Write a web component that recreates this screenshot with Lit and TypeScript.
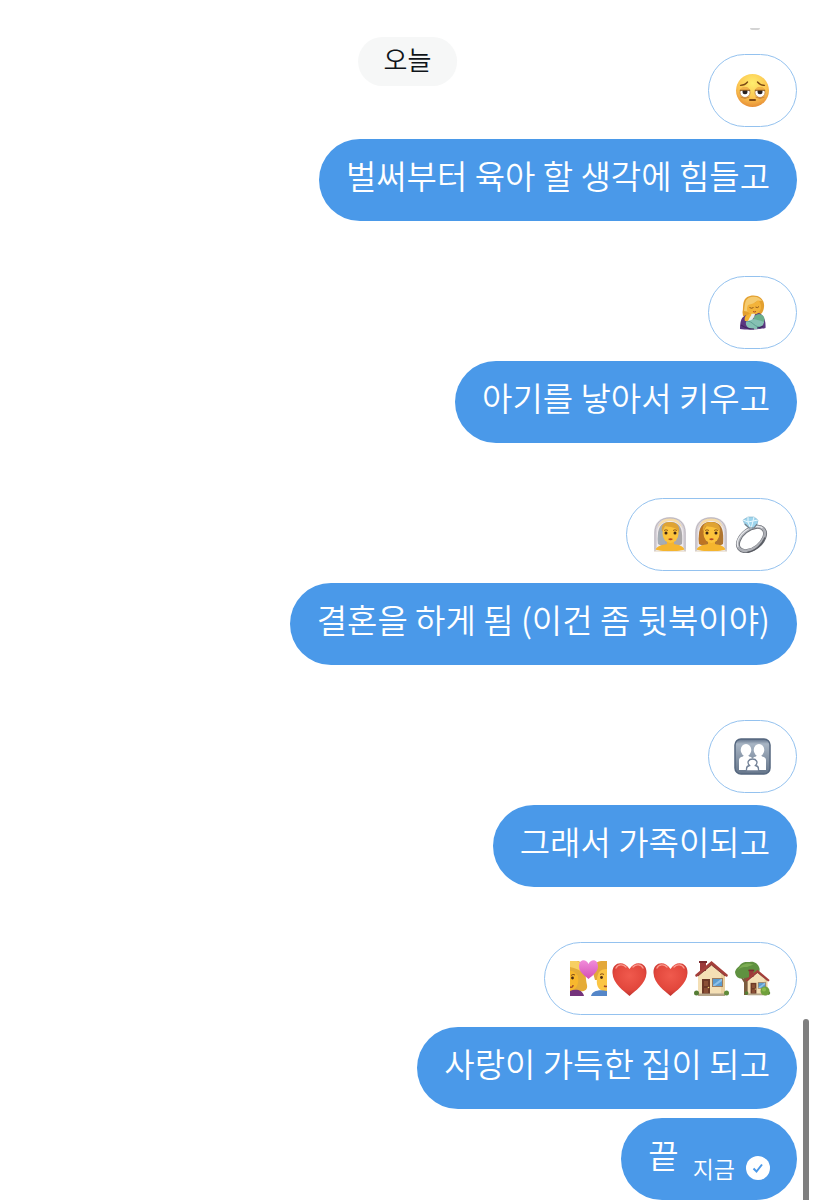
import { LitElement, html, css, svg, nothing, SVGTemplateResult } from 'lit';
import { customElement, property } from 'lit/decorators.js';

interface Message {
  text: string;
  reactions: string[];
  time?: string;
}

const MESSAGES: Message[] = [
  { text: '벌써부터 육아 할 생각에 힘들고', reactions: ['tired'] },
  { text: '아기를 낳아서 키우고', reactions: ['nursing'] },
  { text: '결혼을 하게 됨 (이건 좀 뒷북이야)', reactions: ['bride-grey', 'bride', 'ring'] },
  { text: '그래서 가족이되고', reactions: ['family'] },
  { text: '사랑이 가득한 집이 되고', reactions: ['couple', 'heart', 'heart', 'house', 'garden'] },
  { text: '끝', reactions: [], time: '지금' },
];

const bride = (left: string, hair: string) => svg`
  <path d="M2 36V17C2 6 9 1 18 1s16 5 16 16v19z" fill="#d9d4da"/>
  <path d="M5 34V17C5 8 11 4 18 4s13 4 13 13v17z" fill="#efebee"/>
  <path d="M6 28C5 14 7 6 18 6s13 8 12 22c-5 4-19 4-24 0z" fill=${hair}/>
  <path d="M6 28C5 15 8 8 16 7l-3 21z" fill=${left}/>
  <path d="M3 35c1-5 7-6 12-7v-4h7v4c5 1 10 2 11 7z" fill="#f5b52e"/>
  <path d="M2 33c7 3 25 3 32 0v3H2z" fill="#eee6dc"/>
  <ellipse cx="18.500" cy="17.500" rx="8" ry="9.500" fill="#fcc33c"/>
  <path d="M10 16C9 9 12 6 18 6c7 0 10 4 9 11-1-3-3-5-8-6-3 0-5-1-6-1-1 2-2 4-3 6z" fill="#dfa332"/>
  <path d="M6 12C8 4 13 2 18 2s10 2 12 10c-4-6-8-7-12-7S9 7 6 12z" fill="#f6dcaa"/>
  <path d="M12 14.500q2-1.500 4 0M21 14.500q2-1.500 4 0" fill="none" stroke="#8a5417" stroke-width=".9"/>
  <circle cx="14" cy="17" r="1.500" fill="#3d2415"/>
  <circle cx="23" cy="17" r="1.500" fill="#3d2415"/>
  <path d="M16 23q2.500-1.500 5 0-2.500 2.500-5 0z" fill="#b54724"/>
  <path d="M3 35V17C3 7 9 2 18 2s15 5 15 15v18" fill="none" stroke="#bdb8c0" stroke-width="1"/>`;

const house = svg`
  <path d="M5 16 18.500 4 32 16v19H5z" fill="#f4dfb5"/>
  <path d="M28 13l4 3v19h-4z" fill="#ead09f"/>
  <path d="M7 1h6v10H7z" fill="#9c3a3a"/>
  <path d="M6 1h8v2H6z" fill="#7b2b2e"/>
  <path d="M2 15 18.500 1 35 15l-1 2-2-1L18.500 5 5 16l-2 1z" fill="#a53f3a"/>
  <path d="M5 16 18.500 5 32 16" fill="none" stroke="#752e2d" stroke-width=".8"/>
  <path d="M9 19h8v16H9z" fill="#6e3a28"/>
  <path d="M11 21h4v5h-4zM11 28h4v5h-4z" fill="#8b5036"/>
  <circle cx="15.500" cy="27.500" r=".8" fill="#f2cf72"/>
  <path d="M19 18h11v9H19z" fill="#9b7b5e"/>
  <path d="M20 19h9v7h-9z" fill="#5b9cd0"/>
  <path d="M20 25l8-6h1v2l-7 5h-2z" fill="#8fc0e6"/>
  <path d="M5 33.500h27V36H5z" fill="#b5a58a"/>
  <circle cx="3.500" cy="33" r="2.500" fill="#557d35"/>
  <circle cx="33.500" cy="33" r="2.500" fill="#5f8b3a"/>`;

const EMOJI: Record<string, { label: string; art: SVGTemplateResult }> = {
  tired: {
    label: '지친 얼굴',
    art: svg`
      <radialGradient id="face" cx=".5" cy=".28" r=".74">
        <stop offset="0" stop-color="#ffee6e"/>
        <stop offset=".6" stop-color="#fcc550"/>
        <stop offset="1" stop-color="#e58a35"/>
      </radialGradient>
      <circle cx="18.500" cy="18.500" r="16.500" fill="url(#face)"/>
      <circle cx="11" cy="20.500" r="5" fill="#fff" stroke="#b87e48" stroke-width=".8"/>
      <circle cx="26" cy="20.500" r="5" fill="#fff" stroke="#b87e48" stroke-width=".8"/>
      <circle cx="11" cy="19.800" r="2.500" fill="#2a2020"/>
      <circle cx="26" cy="19.800" r="2.500" fill="#2a2020"/>
      <path d="M5.800 18.300c1-4.500 9.400-4.500 10.400 0zM20.800 18.300c1-4.500 9.400-4.500 10.400 0z" fill="#f3b348"/>
      <path d="M5.800 18.300h10.400M20.800 18.300h10.400" stroke="#80501e" stroke-width="1"/>
      <path d="M6.500 13.300c3.500 0 5.500-1.300 7-3.300M30.500 13.300c-3.500 0-5.500-1.300-7-3.300" fill="none" stroke="#7b4a15" stroke-width="1.300" stroke-linecap="round"/>
      <path d="M6.500 25q4.500 3 9 0M30.500 25q-4.500 3-9 0" fill="none" stroke="#c98032" stroke-width=".9"/>
      <path d="M16 28h5" stroke="#7d4714" stroke-width="2" stroke-linecap="round"/>`,
  },
  nursing: {
    label: '수유',
    art: svg`
      <path d="M8.500 18C10 14 7 4 16 2c8-2 15 3 14 11-.4 4-2 7-5 8l-8 2-8-1z" fill="#e3a030"/>
      <path d="M10 17c1-5 0-13 7-14 6-1 9 1 11 4-7-1-10 3-12 11z" fill="#f5cb70"/>
      <path d="M6 35c0-7 1-13 7-14l12-2c5 2 7 8 6.500 15-8 2-19 2-25.500 1z" fill="#5b3680"/>
      <path d="M14 11c5-1 9-3 10-5 4 4 4 9 1 12s-7 4-10 1-2-5-1-8z" fill="#f3b33a"/>
      <path d="M15.500 13.500q2 1.500 4 0M21.500 13q2 1.500 3.500-.5" fill="none" stroke="#875018" stroke-width=".9"/>
      <path d="M19 17.500q1.500 1 3 0" fill="none" stroke="#ac4b20" stroke-width="1"/>
      <circle cx="25" cy="25.500" r="5.500" fill="#6aae8c"/>
      <path d="M12 28c3-5 10-3 18 0-1 5-4 7-9 7-6 1-10-3-9-7z" fill="#86c0b3"/>
      <path d="M13 27c6 0 7 7 15 6" fill="none" stroke="#5c9e92" stroke-width="1"/>
      <path d="M12 25c2-4 5-6 9-5-1 5-3 6-7 7z" fill="#e9edeb"/>
      <path d="M11 27c-1-3 0-6 4-7 3-1 3 1 1 3l-2 4z" fill="#f4b331"/>
      <path d="M7 31c4 3 8 4 13 4M29 32c-2 2-4 2-6 2" fill="none" stroke="#402660" stroke-width="1.200"/>`,
  },
  'bride-grey': { label: '신부', art: bride('#a5adb4', '#aaa7a9') },
  bride: { label: '신부', art: bride('#bd7523', '#b07630') },
  ring: {
    label: '반지',
    art: svg`
      <g transform="rotate(-38 17.500 23)" fill="none">
        <ellipse cx="17.500" cy="23" rx="15.500" ry="9.500" stroke="#6d7077" stroke-width="4"/>
        <ellipse cx="17.500" cy="22.700" rx="15.500" ry="9.500" stroke="#aeb0b6" stroke-width="2.600"/>
        <path d="M2 21C5 10 29 10 33 21" stroke="#e8e9ec" stroke-width="1.200"/>
        <path d="M6 31c7 4 17 3 23-1" stroke="#585b62" stroke-width="1.400"/>
      </g>
      <path d="M9 4 14 1h6l4 3-1 5-6 4-6-4z" fill="#9ed5ed" stroke="#7eafc8" stroke-width=".6"/>
      <path d="M9 4l5 2 5-1 5-1M14 1v5l3 7 2-8 1-4" fill="none" stroke="#e9f9ff" stroke-width="1"/>
      <path d="M11 8l4 4h5l3-4" fill="none" stroke="#777f88" stroke-width="1.200"/>`,
  },
  family: {
    label: '가족',
    art: svg`
      <linearGradient id="tile" x2="0" y2="1">
        <stop stop-color="#5f7088"/>
        <stop offset=".14" stop-color="#a8b5c4"/>
        <stop offset="1" stop-color="#65758a"/>
      </linearGradient>
      <rect x="1" y="1" width="35" height="35" rx="6" fill="url(#tile)" stroke="#55677f" stroke-width="1.500"/>
      <ellipse cx="12" cy="12" rx="5.300" ry="6" fill="#fff"/>
      <ellipse cx="25" cy="12" rx="5.300" ry="6" fill="#fff"/>
      <path d="M5 32V22q0-3 4-3.500l1-2h4l1 2q2 0 3.500 2 1.500-2 3.500-2l1-2h4l1 2q4 .5 4 3.500v10z" fill="#fff"/>
      <path d="M12.500 33v-2q0-3 3-3.500c-3-3-1-6.500 3-6.500s6 3.500 3 6.500q3 .5 3 3.500v2z" fill="#fff" stroke="#718096" stroke-width="1.300"/>`,
  },
  couple: {
    label: '하트와 커플',
    art: svg`
      <linearGradient id="pink" x2="0" y2="1">
        <stop stop-color="#f18cda"/>
        <stop offset="1" stop-color="#d54fb4"/>
      </linearGradient>
      <path d="M0 1h8c8 2 7 14 9 24 1 5-3 7-7 6H0z" fill="#e5ac38"/>
      <path d="M0 1h7c7 3 8 8 8 14C11 10 5 8 0 7z" fill="#f7cf62"/>
      <path d="M0 11c4 0 6 2 8 5 1 7-1 12-4 13l-4 2z" fill="#f8b82d"/>
      <path d="M0 31c5-2 12-2 14 5H0z" fill="#74327b"/>
      <path d="M37 1h-6c-7 1-8 6-8 12l2 7h12z" fill="#e3a83a"/>
      <path d="M37 9c-4 0-6 1-8 3-3 6-4 17 4 19h4z" fill="#fbc544"/>
      <path d="M21 36c1-5 8-7 16-5v5z" fill="#5486c8"/>
      <circle cx="2.500" cy="18" r="1.400" fill="#492b16"/>
      <circle cx="31.500" cy="17.500" r="1.400" fill="#492b16"/>
      <path d="M1 15.500q2-2 4-.5M30 14.500q2-1.500 4 0" fill="none" stroke="#8b5418" stroke-width="1"/>
      <path d="M0 27q3 1 3-2M34 26q2 1 3 0" fill="none" stroke="#a44b27" stroke-width="1.500"/>
      <path d="M18.500 19C14 15 9 12 9 6.500 9-1 16-1.500 18.500 4 21-1.500 28-1 28 6.500 28 12 23 15 18.500 19z" fill="url(#pink)"/>`,
  },
  heart: {
    label: '빨간 하트',
    art: svg`
      <radialGradient id="red" cx=".5" cy=".38" r=".68">
        <stop stop-color="#f05a4d"/>
        <stop offset=".65" stop-color="#e2473c"/>
        <stop offset="1" stop-color="#ae2b2b"/>
      </radialGradient>
      <path d="M18.500 36C13 31 2 24 1.500 13 1 2 13 0 18.500 9 24 0 36 2 35.500 13 35 24 24 31 18.500 36z" fill="url(#red)"/>
      <path d="M5 8c2-4 7-4 10-1M22 7c3-3 8-3 10 1" fill="none" stroke="#f9998d" stroke-width="1.400" stroke-linecap="round"/>`,
  },
  house: { label: '집', art: house },
  garden: {
    label: '정원이 있는 집',
    art: svg`
      <path d="M10 15h5l1 20h-6z" fill="#7c5c3e"/>
      <path d="M12 24 7 16M13 20l5-5" stroke="#7c5c3e" stroke-width="2"/>
      <path d="M1 12C2 8 5 7 6 5c3-4 8-3 10-3 4-1 8 2 9 5 2 4-1 8-5 9-3 2-7 1-9 2-4 1-9 1-10-6z" fill="#5f9140"/>
      <path d="M4 10C7 3 15 2 20 5c-4 0-5 2-8 2s-5 0-8 3z" fill="#7cad52"/>
      <g transform="translate(10 9) scale(.73)">${house}</g>
      <circle cx="31" cy="31" r="4.500" fill="#70a03c"/>
      <circle cx="30" cy="29.500" r="2" fill="#8dbc4d"/>`,
  },
};

@customElement('chat-message')
export class ChatMessage extends LitElement {
  @property({ attribute: false })
  message!: Message;

  static override styles = css`
    :host {
      display: flex;
      flex-direction: column;
      align-items: flex-end;
      gap: 12px;
    }

    .reactions {
      display: flex;
      align-items: center;
      gap: 4px;
      height: 73px;
      padding: 0 25px;
      box-sizing: border-box;
      border: 1px solid #94c2ef;
      border-radius: 37px;
      background-color: #fff;
    }

    .emoji {
      display: block;
      width: 37px;
      height: 37px;
    }

    .bubble {
      display: flex;
      align-items: flex-end;
      gap: 14px;
      box-sizing: border-box;
      padding: 12px 27px 22px;
      border-radius: 41px;
      background-color: #4a99e9;
      color: #fff;
    }

    .text {
      margin: 0;
      font-size: 33px;
      font-weight: 350;
      line-height: 48px;
    }

    .status {
      display: flex;
      align-items: center;
      gap: 11px;
      height: 20px;
      font-size: 23px;
      font-weight: 350;
      line-height: 24px;
    }

    .check {
      display: block;
      width: 24px;
      height: 24px;
    }
  `;

  private _renderReactions() {
    if (!this.message.reactions.length) return nothing;
    return html`
      <div class="reactions">
        ${this.message.reactions.map(
          (name) => html`
            <svg class="emoji" viewBox="0 0 37 37" role="img" aria-label=${EMOJI[name].label}>
              ${EMOJI[name].art}
            </svg>
          `
        )}
      </div>
    `;
  }

  private _renderStatus() {
    if (!this.message.time) return nothing;
    return html`
      <div class="status">
        <time>${this.message.time}</time>
        <svg class="check" viewBox="0 0 24 24" role="img" aria-label="보냄">
          <circle cx="12" cy="12" r="12" fill="#fff" />
          <path d="M7.500 12.500l3 3 5.500-7" fill="none" stroke="#4a99e9" stroke-width="2" />
        </svg>
      </div>
    `;
  }

  override render() {
    return html`
      ${this._renderReactions()}
      <div class="bubble">
        <p class="text">${this.message.text}</p>
        ${this._renderStatus()}
      </div>
    `;
  }
}

@customElement('app-root')
export class AppRoot extends LitElement {
  static override styles = css`
    :host {
      display: block;
      position: relative;
      min-height: 100vh;
      background-color: #fff;
      font-family: 'Noto Sans CJK KR', sans-serif;
    }

    .day {
      position: absolute;
      top: 37px;
      left: 50%;
      transform: translateX(-50%);
      padding: 0 26px 5px;
      border-radius: 25px;
      background-color: #f6f7f7;
      color: #0f1419;
      font-size: 26px;
      font-weight: 350;
      line-height: 44px;
      white-space: nowrap;
    }

    .messages {
      display: flex;
      flex-direction: column;
      gap: 55px;
      padding: 28px 18px 0;
    }

    /* bottom edge of the reaction above the first visible message */
    .previous {
      align-self: flex-end;
      width: 10px;
      height: 2px;
      margin: 0 37px -31px 0;
      border-radius: 0 0 5px 5px;
      background-color: #d4d4d4;
    }

    .last {
      margin-top: -46px;
    }

    .scroll-thumb {
      position: absolute;
      top: 1019px;
      right: 6px;
      bottom: 0;
      width: 6px;
      border-radius: 3px 3px 0 0;
      background-color: #7f7f7f;
    }
  `;

  override render() {
    return html`
      <main class="messages">
        <div class="previous"></div>
        ${MESSAGES.map(
          (message) => html`
            <chat-message class=${message.time ? 'last' : ''} .message=${message}></chat-message>
          `
        )}
      </main>
      <div class="day">오늘</div>
      <div class="scroll-thumb"></div>
    `;
  }
}

declare global {
  interface HTMLElementTagNameMap {
    'chat-message': ChatMessage;
    'app-root': AppRoot;
  }
}
